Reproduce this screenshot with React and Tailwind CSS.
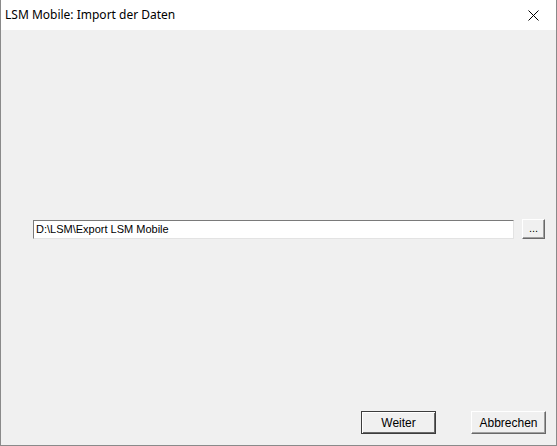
export default function App() {
  const ui = { fontFamily: '"Liberation Sans", Arial, sans-serif' };
  return (
    <div className="w-[557px] h-[446px] flex flex-col bg-[#f0f0f0] border-x border-b border-[#8a8a8a]" style={ui}>
      <div className="h-[30px] bg-white flex items-center justify-between shrink-0">
        <span className="pl-[4px] text-[12px] text-black" style={{ fontFamily: '"Noto Sans", "Open Sans", sans-serif' }}>
          LSM Mobile: Import der Daten
        </span>
        <div className="w-[46px] h-[30px] flex items-center justify-center">
          <svg width="11" height="11" viewBox="0 0 11 11">
            <path d="M0.5 0.5 L10.5 10.5 M10.5 0.5 L0.5 10.5" stroke="#000" strokeWidth="1" />
          </svg>
        </div>
      </div>
      <div className="flex-1 flex flex-col pt-[189px] pb-[11px] pl-[32px] pr-[10px]">
        <div className="flex items-center gap-[8px]">
          <div className="w-[481px] h-[19px] bg-white border border-t-[#7a7a7a] border-l-[#7a7a7a] border-r-[#e3e3e3] border-b-[#e3e3e3] flex items-center pl-[2px] text-[11px] leading-none text-black">
            D:\LSM\Export LSM Mobile
          </div>
          <div className="w-[23px] h-[20px] bg-[#f0f0f0] border border-t-white border-l-white border-r-[#696969] border-b-[#696969] shadow-[inset_-1px_-1px_0_#a0a0a0] flex items-center justify-center text-[11px] leading-none text-black pb-[2px]">
            ...
          </div>
        </div>
        <div className="flex-1" />
        <div className="flex justify-end gap-[35px]">
          <div className="w-[75px] h-[23px] bg-[#f0f0f0] border border-[#3c3c3c] shadow-[inset_1px_1px_0_#ffffff,inset_-1px_-1px_0_#696969] flex items-center justify-center text-[12px] text-black">
            Weiter
          </div>
          <div className="w-[75px] h-[23px] bg-[#f0f0f0] border border-t-white border-l-white border-r-[#696969] border-b-[#696969] shadow-[inset_-1px_-1px_0_#a0a0a0] flex items-center justify-center text-[12px] text-black">
            Abbrechen
          </div>
        </div>
      </div>
    </div>
  );
}
